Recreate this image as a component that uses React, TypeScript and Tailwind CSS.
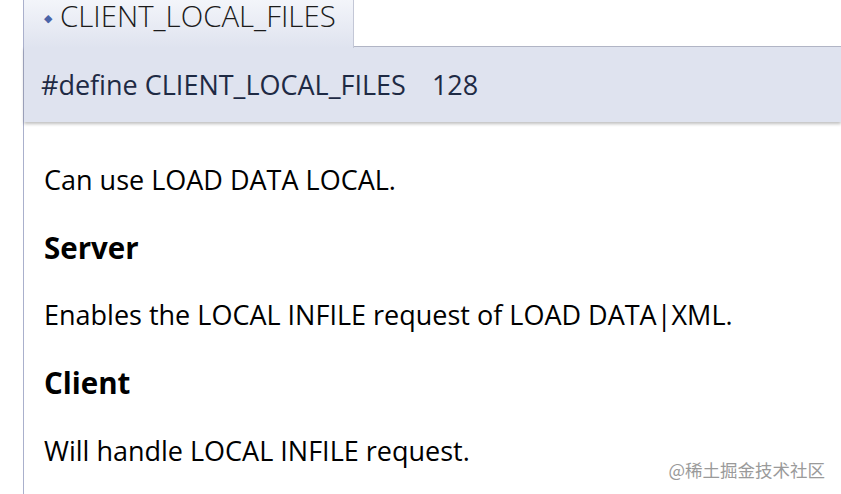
export default function App() {
    return (
        <main className="relative w-[841px] h-[494px] overflow-hidden bg-white flex" style={{ fontFamily: '"Open Sans", "Noto Sans", sans-serif' }}>
            {/* left gutter */}
            <div className="w-[24px] shrink-0 bg-white border-r border-[#aab0cc]"></div>

            <div className="flex-1 flex flex-col">
                {/* tab row */}
                <div className="flex h-[47px]">
                    <div className="w-[330px] h-[48px] bg-gradient-to-b from-[#f3f5fa] to-[#dfe3ef] border-r border-[#c3c7d6] flex items-start pl-[20px] pt-[1px] gap-[8px] relative z-10">
                        <span className="text-[#4a64a8] text-[11px] leading-none mt-[11px]">◆</span>
                        <span className="text-[29.4px] font-light text-[#1b1b1b] leading-[30px]">CLIENT_LOCAL_FILES</span>
                    </div>
                    <div className="flex-1 border-b border-[#b4b8c8]"></div>
                </div>

                {/* definition bar */}
                <div className="h-[75px] bg-[#dfe3ef] flex items-center pl-[17px] pt-[2px] shadow-[0_2px_3px_rgba(0,0,0,0.25)] text-[#1e2a44] text-[27px]">
                    <span>#define CLIENT_LOCAL_FILES</span>
                    <span className="ml-[26px]">128</span>
                </div>

                {/* description */}
                <div className="pl-[20px] pt-[41px] text-black text-[27px] flex flex-col">
                    <p className="leading-[34px]">Can use LOAD DATA LOCAL.</p>
                    <h2 className="font-bold text-[29.5px] leading-[34px] mt-[34px]">Server</h2>
                    <p className="leading-[34px] mt-[33px]">Enables the LOCAL INFILE request of LOAD DATA|XML.</p>
                    <h2 className="font-bold text-[29.5px] leading-[34px] mt-[34px]">Client</h2>
                    <p className="leading-[34px] mt-[34px]">Will handle LOCAL INFILE request.</p>
                </div>
            </div>

            <span className="absolute right-[16px] bottom-[16px] text-[17.5px] text-[#9a9a9a] leading-none" style={{ fontFamily: '"Noto Sans CJK SC", sans-serif' }}>@稀土掘金技术社区</span>
        </main>
    )
}
